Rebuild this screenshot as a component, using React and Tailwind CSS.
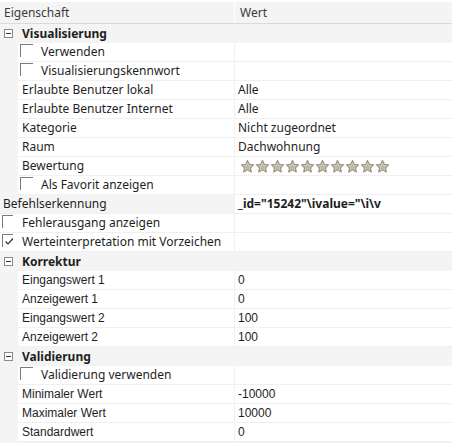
import React from "react";

const segoe = { fontFamily: '"Noto Sans", "Open Sans", sans-serif' };
const tahoma = { fontFamily: '"Liberation Sans", Arial, sans-serif' };

const Star = () => (
  <svg width="15" height="15" viewBox="0 0 24 24">
    <path
      d="M12 2.5l2.9 6.2 6.7.7-5 4.6 1.4 6.7L12 17.3l-6 3.4 1.4-6.7-5-4.6 6.7-.7z"
      fill="#dcd6c6"
      stroke="#9b9383"
      strokeWidth="2"
      strokeLinejoin="round"
    />
    <path d="M12 7.5l1.6 3.4 3.6.4-2.7 2.5.8 3.6L12 15.6l-3.3 1.8.8-3.6-2.7-2.5 3.6-.4z" fill="#bfb7a5" />
  </svg>
);

const CheckBox = ({ checked }) => (
  <span className="relative inline-block w-[13px] h-[13px] border-t border-l border-[#7a7a7a] shrink-0">
    {checked && (
      <svg width="11" height="11" viewBox="0 0 11 11" className="absolute left-[1px] top-[1px]">
        <path d="M1.5 5.5l2.5 2.5 5-5.5" fill="none" stroke="#333" strokeWidth="1.2" />
      </svg>
    )}
  </span>
);

const Minus = () => (
  <span className="inline-flex items-center justify-center w-[9px] h-[9px] border border-[#8a8a8a] bg-white">
    <span className="block w-[5px] h-px bg-[#333]" />
  </span>
);

const Category = ({ label }) => (
  <div className="flex h-[19px] bg-[#f4f4f4]">
    <div className="w-[18px] flex items-center pl-[4px]">
      <Minus />
    </div>
    <div className="flex items-center pl-[4px] font-bold text-[12px] text-[#1e1e1e]" style={segoe}>
      {label}
    </div>
  </div>
);

const Row = ({ label, value, check, font = segoe, bold }) => (
  <div className="flex h-[19px]">
    <div className="w-[18px] bg-[#f4f4f4]" />
    <div className="w-[217px] flex items-center border-b border-r border-[#f0f0f0] bg-white text-[12px] text-[#1e1e1e]" style={font}>
      {check !== undefined ? (
        <>
          <span className="ml-[2px] mt-[1px]">
            <CheckBox checked={check} />
          </span>
          <span className="ml-[8px]">{label}</span>
        </>
      ) : (
        <span className="ml-[4px]">{label}</span>
      )}
    </div>
    <div
      className={`flex-1 flex items-center pl-[3px] border-b border-[#f0f0f0] bg-white text-[12px] text-[#1e1e1e] ${bold ? "font-bold" : ""}`}
      style={font}
    >
      {value}
    </div>
  </div>
);

export default function App() {
  return (
    <div className="w-[452px] h-[443px] bg-[#f4f4f4] overflow-hidden select-none">
      {/* Header */}
      <div className="flex h-[24px] pt-[2px] bg-white">
        <div className="flex w-full bg-[#f4f4f4] border-b border-[#dadada] text-[12px] text-[#3a3a3a]" style={segoe}>
          <div className="w-[235px] flex items-center pl-[4px] border-r border-white">Eigenschaft</div>
          <div className="flex-1 flex items-center pl-[5px]">Wert</div>
        </div>
      </div>

      <Category label="Visualisierung" />
      <Row label="Verwenden" check={false} />
      <Row label="Visualisierungskennwort" check={false} />
      <Row label="Erlaubte Benutzer lokal" value="Alle" />
      <Row label="Erlaubte Benutzer Internet" value="Alle" />
      <Row label="Kategorie" value="Nicht zugeordnet" />
      <Row label="Raum" value="Dachwohnung" />
      <Row
        label="Bewertung"
        value={
          <span className="flex items-center ml-[2px]">
            {Array.from({ length: 10 }).map((_, i) => (
              <Star key={i} />
            ))}
          </span>
        }
      />
      <Row label="Als Favorit anzeigen" check={false} />

      {/* Befehlserkennung */}
      <div className="flex h-[19px]">
        <div className="w-[235px] flex items-center pl-[3px] bg-[#f4f4f4] border-b border-r border-[#f0f0f0] text-[12px] text-[#1e1e1e]" style={segoe}>
          Befehlserkennung
        </div>
        <div className="flex-1 flex items-center pl-[3px] bg-white border-b border-[#f0f0f0] font-bold text-[12px] text-[#1e1e1e]" style={segoe}>
          _id="15242"\ivalue="\i\v
        </div>
      </div>
      {[
        ["Fehlerausgang anzeigen", false],
        ["Werteinterpretation mit Vorzeichen", true],
      ].map(([label, checked]) => (
        <div key={label} className="flex h-[19px] bg-white">
          <div className="w-[235px] flex items-center border-b border-r border-[#f0f0f0] text-[12px] text-[#1e1e1e]" style={segoe}>
            <span className="ml-[2px] mt-[1px] w-[11px] overflow-hidden">
              <CheckBox checked={checked} />
            </span>
            <span className="ml-[9px]">{label}</span>
          </div>
          <div className="flex-1 border-b border-[#f0f0f0]" />
        </div>
      ))}

      <Category label="Korrektur" />
      <Row label="Eingangswert 1" value="0" font={tahoma} />
      <Row label="Anzeigewert 1" value="0" font={tahoma} />
      <Row label="Eingangswert 2" value="100" font={tahoma} />
      <Row label="Anzeigewert 2" value="100" font={tahoma} />

      <Category label="Validierung" />
      <Row label="Validierung verwenden" check={false} />
      <Row label="Minimaler Wert" value="-10000" font={tahoma} />
      <Row label="Maximaler Wert" value="10000" font={tahoma} />
      <Row label="Standardwert" value="0" font={tahoma} />
    </div>
  );
}
